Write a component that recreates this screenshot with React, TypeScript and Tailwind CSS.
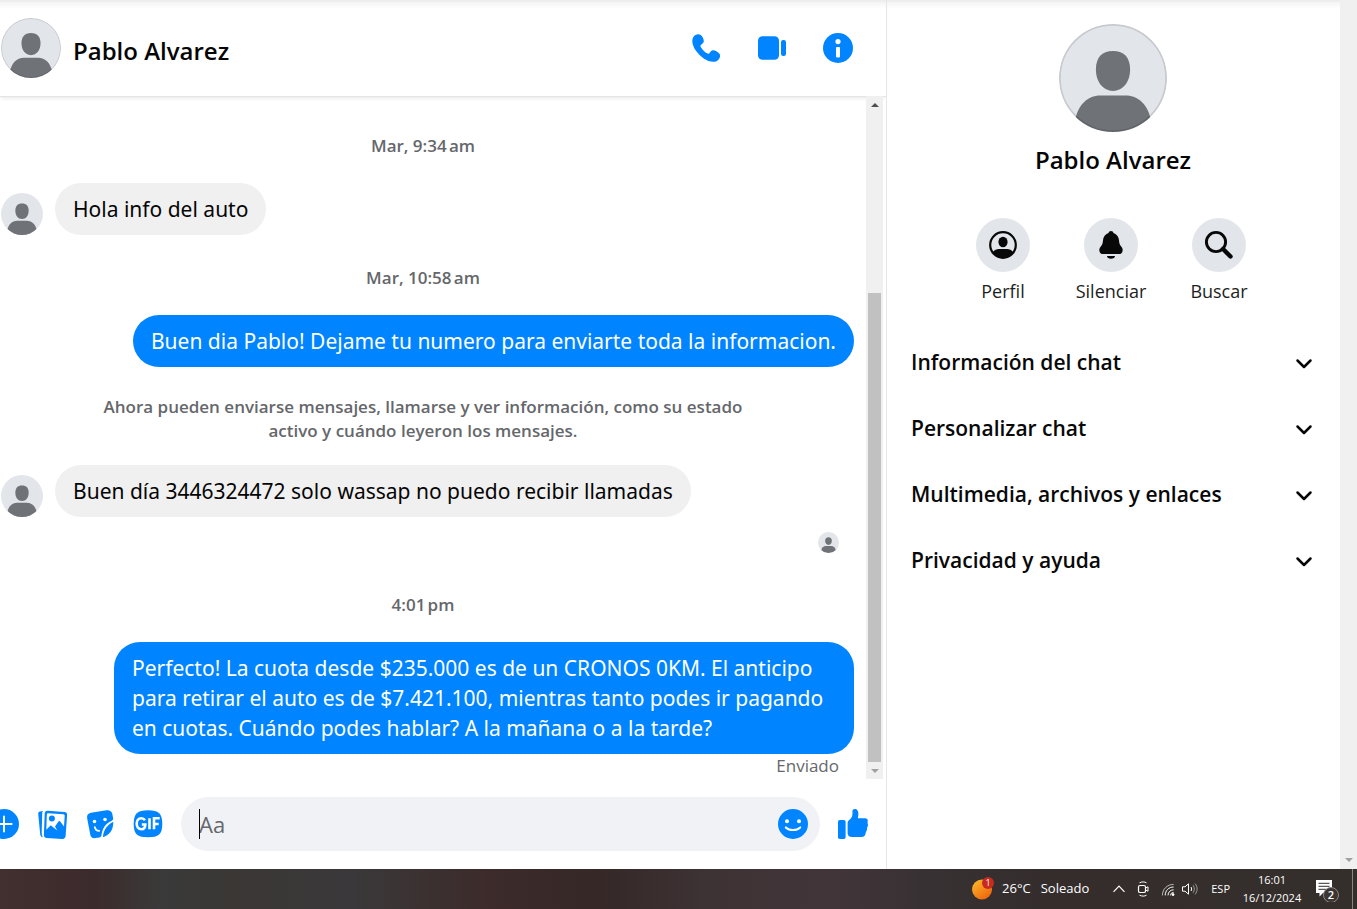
import React from "react";

const SECTIONS = [
  "Información del chat",
  "Personalizar chat",
  "Multimedia, archivos y enlaces",
  "Privacidad y ayuda",
];

function Avatar({ className, ring }: { className: string; ring?: boolean }) {
  return (
    <svg viewBox="0 0 36 36" className={`shrink-0 overflow-hidden rounded-full ${className}`} aria-hidden="true">
      <rect width="36" height="36" fill="#e2e5ea" />
      <path
        d="M18 9C21.8 9 23.7 11.2 23.7 15.2C23.7 19.2 21.4 22.3 18 22.3C14.6 22.3 12.3 19.2 12.3 15.2C12.3 11.2 14.2 9 18 9Z"
        fill="#6f7277"
      />
      <path d="M5.4 32C6.2 27.2 9.4 23.8 13.8 23.8H22.2C26.6 23.8 29.8 27.2 30.6 32V36H5.4Z" fill="#6f7277" />
      {ring && <circle cx="18" cy="18" r="17.7" fill="none" stroke="#000" strokeOpacity=".12" strokeWidth=".6" />}
    </svg>
  );
}

function Icon({ children, className = "size-[30px]" }: { children: React.ReactNode; className?: string }) {
  return (
    <svg viewBox="0 0 30 30" className={`block shrink-0 ${className}`} fill="#0084ff" aria-hidden="true">
      {children}
    </svg>
  );
}

function DateLine({ children, className }: { children: React.ReactNode; className: string }) {
  return (
    <div className={`pr-[9px] text-center text-[17px] leading-6 font-semibold text-[#65676b] ${className}`}>
      {children}
    </div>
  );
}

function Incoming({ children, className }: { children: React.ReactNode; className: string }) {
  return (
    <div className={`flex items-end gap-3 ${className}`}>
      <Avatar className="size-[42px]" />
      <div className="rounded-[26px] bg-[#f0f0f0] px-[18px] py-[11px] font-['Noto_Sans',sans-serif] text-[21px] leading-[30px] text-[#050505]">
        {children}
      </div>
    </div>
  );
}

function Outgoing({ children, className }: { children: React.ReactNode; className: string }) {
  return (
    <div className={`flex justify-end ${className}`}>
      <div className="max-w-[740px] rounded-[26px] bg-[#0084ff] px-[18px] py-[11px] font-['Noto_Sans',sans-serif] text-[21px] leading-[30px] text-white">
        {children}
      </div>
    </div>
  );
}

function Header() {
  return (
    <header className="flex h-24 items-center pr-[33px] pl-px shadow-[0_1px_0_#e4e4e4,0_3px_4px_-1px_rgba(0,0,0,0.1)]">
      <Avatar className="size-[60px]" ring />
      <h1 className="ml-3 flex-1 pt-1.5 text-2xl font-semibold text-[#050505]">Pablo Alvarez</h1>
      <div className="flex gap-9">
        <button aria-label="Llamar">
          <Icon>
            <path d="M2.2 4.2C3.6 1.6 7.2.3 9.4 1.8C11.4 3.2 13 6.4 12.8 8.4C12.7 9.8 11 10.8 10 11.8C9.2 12.6 9.4 13.4 10 14.4C11.6 16.9 13.6 18.9 16 20.3C17 20.9 17.7 21 18.4 20.2C19.4 19 20.4 17.4 21.8 17.3C23.8 17.2 27 18.8 28.5 20.8C30 23 28.6 26.4 26 27.9C22.8 29.7 17.6 28.8 12.4 25.2C9.5 23.2 7 20.7 5 17.8C1.4 12.6.4 7.4 2.2 4.2Z" />
          </Icon>
        </button>
        <button aria-label="Videollamada">
          <Icon>
            <rect x="1" y="3.2" width="21" height="23.6" rx="4.6" />
            <rect x="24" y="7" width="5" height="16" rx="2.2" />
          </Icon>
        </button>
        <button aria-label="Información">
          <Icon>
            <circle cx="15" cy="15" r="15" />
            <circle cx="15" cy="8.6" r="2.6" fill="#fff" />
            <rect x="13" y="14" width="4" height="10.4" rx=".8" fill="#fff" />
          </Icon>
        </button>
      </div>
    </header>
  );
}

function ChatScrollbar() {
  return (
    <div className="mr-[3px] flex w-[17px] shrink-0 flex-col items-center bg-[#f0f0f0]" aria-hidden="true">
      <div className="flex h-[17px] items-center">
        <svg viewBox="0 0 8 4" className="h-1 w-2" fill="#505050"><path d="M4 0L8 4H0Z" /></svg>
      </div>
      <div className="grow-[180]" />
      <div className="w-[13px] grow-[469] bg-[#c1c1c1]" />
      <div className="flex h-[17px] items-center">
        <svg viewBox="0 0 8 4" className="h-1 w-2" fill="#a0a0a0"><path d="M4 4L0 0H8Z" /></svg>
      </div>
    </div>
  );
}

function Composer() {
  return (
    <div className="flex h-[90px] items-center gap-[18px] pr-[18px]">
      <button aria-label="Más acciones" className="-ml-[11px]">
        <Icon>
          <circle cx="15" cy="15" r="15" />
          <path d="M15 7.4V22.6M7.4 15H22.6" stroke="#fff" strokeWidth="2" strokeLinecap="round" />
        </Icon>
      </button>
      <button aria-label="Adjuntar foto">
        <Icon>
          <path d="M1.2 4.8C1.1 3.6 1.8 2.7 3 2.5L5.9 2.1C5.4 3 5.2 3.8 5.2 4.8L4.7 23.5C4.7 25.4 5 26.8 6 28.2C4.4 28.1 3.4 27.2 3.2 25.6Z" />
          <path d="M10.8 1.8L27.3 2.9C29.3 3 30.3 4.2 30.1 6.1L28.6 27.1C28.4 29.1 27.2 30 25.3 29.9L9.7 28.9C7.8 28.8 6.8 27.6 6.9 25.7L7.7 4.6C7.8 2.6 8.9 1.7 10.8 1.8Z" />
          <path d="M11.3 4.2L26.2 5.2C27.2 5.3 27.8 5.9 27.7 6.9L27 17.4L23 12.3C22.5 11.7 21.9 11.8 21.5 12.4L18 17.6L20.3 21.4L14.6 16.9C14 16.4 13.5 16.5 13 17L9.3 20.8L9.8 5.7C9.8 4.7 10.3 4.1 11.3 4.2Z" fill="#fff" />
          <circle cx="14.9" cy="9.6" r="3" />
        </Icon>
      </button>
      <button aria-label="Elegir sticker">
        <Icon>
          <path d="M2.2 9.4C1.6 6.2 3 4.3 6 3.7L21.5 1.2C24.5.8 26.6 2 27.3 4.8L28.1 9.2C28.3 10.6 27.5 11.4 26.3 12C20 15.2 17.5 19.5 16.5 26C16.3 27.3 15.5 28.4 14.2 28.6L10.4 29.1C7.4 29.5 5.7 28.2 5.2 25.3Z" />
          <path d="M28.3 13.6C28.2 20.8 24.8 26 18.6 27.9C18.1 28 17.9 27.7 18 27.2C18.7 20.8 22.4 15.8 27.5 13.2C28 13 28.3 13.1 28.3 13.6Z" />
          <circle cx="9.5" cy="12.5" r="1.8" fill="#fff" />
          <circle cx="20" cy="10.5" r="1.8" fill="#fff" />
          <path d="M9.8 18.2C10.4 20.4 12 21.9 14.2 21.8" stroke="#fff" strokeWidth="1.8" strokeLinecap="round" fill="none" />
        </Icon>
      </button>
      <button aria-label="Elegir GIF">
        <Icon>
          <path d="M15 1.2C25.6 1.2 29.3 4.4 29.3 15S25.6 28.2 15 28.2S.7 25.6.7 15S4.4 1.2 15 1.2Z" />
          <path d="M12 11.3C11 9.8 9.8 9.3 8.3 9.3C5.4 9.3 3.7 11.7 3.7 14.8C3.7 18 5.5 20.2 8.3 20.2C10.8 20.2 12.3 18.6 12.3 15.5H8.8M16.5 9.2V20.3M21 20.3V9.3H26.7M21 15H25.7" fill="none" stroke="#fff" strokeWidth="2.6" />
        </Icon>
      </button>
      <div className="relative flex h-[54px] min-w-0 flex-1 items-center rounded-full bg-[#f0f2f5] pr-3 pl-[18px]">
        <input
          aria-label="Mensaje"
          placeholder="Aa"
          className="min-w-0 flex-1 bg-transparent text-[22px] leading-[30px] outline-none placeholder:text-[#65676b]"
        />
        <span className="absolute top-3 left-[18px] h-[30px] w-px bg-black" />
        <button aria-label="Elegir emoji">
          <Icon>
            <circle cx="15" cy="15" r="15" />
            <circle cx="9" cy="12.2" r="2" fill="#fff" />
            <circle cx="21" cy="12.2" r="2" fill="#fff" />
            <path d="M7.8 18.4C11.6 22 18.4 22 22.2 18.4" stroke="#fff" strokeWidth="2" strokeLinecap="round" fill="none" />
          </Icon>
        </button>
      </div>
      <button aria-label="Me gusta">
        <Icon>
          <rect x="0" y="11" width="7.6" height="19" rx="1.8" />
          <path d="M9.6 14.2C9.6 12.6 10 11.9 11.2 11C13.6 9.2 14.9 6.8 14.4 2.8C14.2 1 15.4 0 17 0C19.6 0 20.4 2.8 20.4 5.2C20.4 6.8 20.1 8.1 19.8 9.2H27C29 9.2 30 10.4 29.7 12.1C29.5 13.2 29.4 13.6 29.7 14.6C30.2 16.2 30 17.6 29 18.8C29.2 20.6 28.8 21.8 27.8 22.9C27.8 26 26.4 28 23.2 28H14C11.2 28 9.6 26.4 9.6 24Z" />
        </Icon>
      </button>
    </div>
  );
}

function QuickAction({ label, children }: { label: string; children: React.ReactNode }) {
  return (
    <button className="flex w-[108px] flex-col items-center text-lg leading-6 text-[#1c1e21]">
      <span className="mb-[7px] flex size-[54px] items-center justify-center rounded-full bg-[#e2e5ea]">
        <svg viewBox="0 0 30 30" className="size-[30px]" fill="#080808" aria-hidden="true">
          {children}
        </svg>
      </span>
      {label}
    </button>
  );
}

function Sidebar() {
  return (
    <aside className="w-[454px] shrink-0 border-l border-[#e4e6eb] pt-6">
      <div className="flex flex-col items-center pr-px">
        <Avatar className="size-[108px]" ring />
        <h2 className="mt-3 text-2xl font-semibold text-[#050505]">Pablo Alvarez</h2>
      </div>
      <div className="mt-[42px] flex justify-center pr-[5px]">
        <QuickAction label="Perfil">
          <circle cx="15" cy="15" r="12.8" fill="none" stroke="#080808" strokeWidth="2.2" />
          <ellipse cx="15" cy="12" rx="4.6" ry="5.2" />
          <path d="M4.8 22C6.4 19.9 8.6 19 11 19H19C21.4 19 23.6 19.9 25.2 22C23.2 26 19.5 28 15 28S6.8 26 4.8 22Z" />
        </QuickAction>
        <QuickAction label="Silenciar">
          <path d="M15 1C16.4 1 17.2 1.8 17.5 3C21 4.2 22.9 7 23.1 11C23.2 13.8 24 15.1 25.4 16.7C26.5 18 26.8 19 26.6 20.9C26.3 22.9 25 24 23 24H7C5 24 3.7 22.9 3.4 20.9C3.2 19 3.5 18 4.6 16.7C6 15.1 6.8 13.8 6.9 11C7.1 7 9 4.2 12.5 3C12.8 1.8 13.6 1 15 1Z" />
          <path d="M11 25.9H19C19 27.6 17.3 28.7 15 28.7S11 27.6 11 25.9Z" />
        </QuickAction>
        <QuickAction label="Buscar">
          <circle cx="12" cy="12" r="9.6" fill="none" stroke="#080808" strokeWidth="2.9" />
          <path d="M19 19L26.5 26.5" stroke="#080808" strokeWidth="4.4" strokeLinecap="round" />
        </QuickAction>
      </div>
      <div className="mt-[27px]">
        {SECTIONS.map((s) => (
          <button
            key={s}
            className="flex h-[66px] w-full items-center justify-between px-6 text-left text-[21px] font-semibold text-[#080809]"
          >
            {s}
            <svg viewBox="0 0 24 24" className="size-6" fill="none" aria-hidden="true">
              <path d="M5.5 9.5L12 16L18.5 9.5" stroke="#080808" strokeWidth="2.5" strokeLinecap="round" strokeLinejoin="round" />
            </svg>
          </button>
        ))}
      </div>
    </aside>
  );
}

function Taskbar() {
  return (
    <footer className="flex h-10 shrink-0 items-center justify-end bg-[linear-gradient(90deg,#422f2f_0%,#3c2b2c_7%,#3a3a3a_12%,#3a3735_17%,#3a383a_26%,#3c2b2a_36%,#352827_44%,#3d3234_52%,#42353a_61%,#383133_68%,#342d2c_78%,#352f2c_100%)] text-[13px] text-white">
      <button className="flex items-center" aria-label="26°C Soleado">
        <svg viewBox="0 0 24 24" className="size-6" aria-hidden="true">
          <defs>
            <linearGradient id="sun" x1="0" y1="0" x2=".7" y2="1">
              <stop offset="0" stopColor="#fbc02d" />
              <stop offset="1" stopColor="#f0650e" />
            </linearGradient>
          </defs>
          <circle cx="11" cy="12.5" r="10" fill="url(#sun)" />
          <circle cx="17" cy="6" r="6" fill="#c92a1f" />
          <text x="17" y="9" fontSize="9" textAnchor="middle" fill="#fff">1</text>
        </svg>
        <span className="ml-[7px]">26°C</span>
        <span className="ml-[10px]">Soleado</span>
      </button>
      <svg viewBox="0 0 12 12" className="ml-6 size-3" fill="none" stroke="#fff" aria-hidden="true">
        <path d="M.5 8.8L6 3.2L11.5 8.8" strokeWidth="1.2" />
      </svg>
      <svg viewBox="0 0 16 16" className="ml-[10px] size-4" fill="none" stroke="#fff" aria-hidden="true">
        <rect x="3.5" y="4.5" width="7" height="7" rx="1.6" strokeWidth="1.2" />
        <path d="M10.5 7L13 5.8V10.2L10.5 9M4.5 1.8C7 .6 9.5.6 11.5 1.8M4.5 14.2C7 15.4 9.5 15.4 11.5 14.2" />
      </svg>
      <svg viewBox="0 0 16 16" className="ml-[9px] size-4" fill="none" stroke="#fff" aria-hidden="true">
        <path d="M2.4 14.4C2.4 8.2 7.2 3.4 13.6 3.4" strokeOpacity=".65" />
        <path d="M5.2 14.4C5.2 9.6 8.8 6 13.6 6M8 14.4C8 11.2 10.4 8.8 13.6 8.8M10.6 14.4C10.6 12.6 11.8 11.4 13.6 11.4" />
        <circle cx="13" cy="13.6" r="1" fill="#fff" />
      </svg>
      <svg viewBox="0 0 18 16" className="ml-[5px] h-4 w-[18px]" fill="none" stroke="#fff" aria-hidden="true">
        <path d="M1.5 5.8H4L7.5 2.8V13.2L4 10.2H1.5Z" />
        <path d="M10 6C10.8 7.2 10.8 8.8 10 10" />
        <path d="M12 4.2C13.8 6.4 13.8 9.6 12 11.8M14 2.6C16.8 5.6 16.8 10.4 14 13.4" strokeOpacity=".5" />
      </svg>
      <span className="ml-3 text-[11px]">ESP</span>
      <div className="ml-3 w-[60px] text-center text-[11px] leading-[18px]">
        <div>16:01</div>
        <div>16/12/2024</div>
      </div>
      <button aria-label="2 notificaciones" className="ml-[13px]">
        <svg viewBox="0 0 26 26" className="block size-[26px]" aria-hidden="true">
          <path d="M1 4H17V17H8L4.5 20.5V17H1Z" fill="#fff" />
          <path d="M3.5 7.3H14.5M3.5 10.3H14.5M3.5 13.3H11" stroke="#352f2c" />
          <circle cx="16" cy="19" r="7.5" fill="#3b3634" stroke="#8b8886" />
          <text x="16" y="23" fontSize="11" fontWeight="600" textAnchor="middle" fill="#fff">2</text>
        </svg>
      </button>
      <div className="mr-1 ml-[11px] h-full w-px bg-[#8a8684]" />
    </footer>
  );
}

export default function App() {
  return (
    <div className="flex min-h-screen flex-col bg-white font-['Open_Sans','Noto_Sans',sans-serif]">
      <div className="flex flex-1">
        <div className="flex min-w-0 flex-1 bg-[linear-gradient(#eeeeee_2px,#f5f5f5_2px,#ffffff_9px)]">
          <main className="flex min-w-0 flex-1 flex-col">
            <Header />
            <div className="flex flex-1">
              <div className="min-w-0 flex-1 pr-3 pl-px">
                <DateLine className="mt-[38px]">Mar, 9:34{"\u202f"}am</DateLine>
                <Incoming className="mt-[25px]">Hola info del auto</Incoming>
                <DateLine className="mt-[31px]">Mar, 10:58{"\u202f"}am</DateLine>
                <Outgoing className="mt-[25px]">
                  Buen dia Pablo! Dejame tu numero para enviarte toda la informacion.
                </Outgoing>
                <DateLine className="mx-auto mt-7 max-w-[660px]">
                  Ahora pueden enviarse mensajes, llamarse y ver información, como su estado activo y cuándo
                  leyeron los mensajes.
                </DateLine>
                <Incoming className="mt-[22px]">Buen día 3446324472 solo wassap no puedo recibir llamadas</Incoming>
                <div className="mt-[15px] flex justify-end pr-[15px]">
                  <Avatar className="size-[21px]" />
                </div>
                <DateLine className="mt-10">4:01{"\u202f"}pm</DateLine>
                <Outgoing className="mt-[25px]">
                  Perfecto! La cuota desde $235.000 es de un CRONOS 0KM. El anticipo para retirar el auto es de
                  $7.421.100, mientras tanto podes ir pagando en cuotas. Cuándo podes hablar? A la mañana o a la
                  tarde?
                </Outgoing>
                <div className="pr-[15px] text-right text-[17px] leading-6 text-[#65676b]">Enviado</div>
              </div>
              <ChatScrollbar />
            </div>
            <Composer />
          </main>
          <Sidebar />
        </div>
        <div className="flex w-[17px] shrink-0 flex-col items-center justify-end bg-[#f0f0f0] pb-[7px]" aria-hidden="true">
          <svg viewBox="0 0 8 4" className="h-1 w-2" fill="#a0a0a0"><path d="M4 4L0 0H8Z" /></svg>
        </div>
      </div>
      <Taskbar />
    </div>
  );
}
